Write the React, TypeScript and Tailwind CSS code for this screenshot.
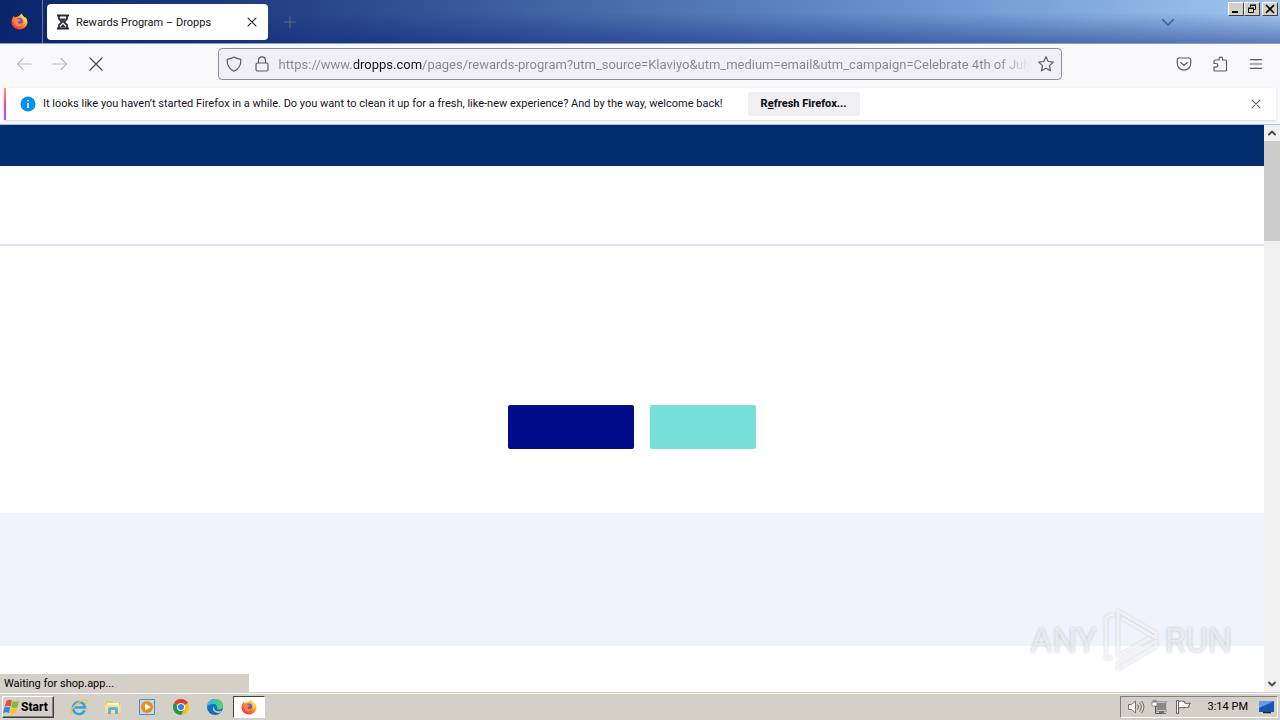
import { useId, useState } from "react";
import type { ReactNode } from "react";

const PAGE_URL =
  "https://www.dropps.com/pages/rewards-program?utm_source=Klaviyo&utm_medium=email&utm_campaign=Celebrate 4th of July";

function FirefoxLogo({ size }: { size: number }) {
  const id = useId();
  return (
    <svg width={size} height={size} viewBox="0 0 32 32" aria-hidden="true">
      <defs>
        <linearGradient id={id + "a"} x1="0.85" y1="0.1" x2="0.15" y2="0.95">
          <stop offset="0" stopColor="#fff44f" />
          <stop offset="0.3" stopColor="#ffb02e" />
          <stop offset="0.6" stopColor="#ff6b2b" />
          <stop offset="1" stopColor="#f0255f" />
        </linearGradient>
        <radialGradient id={id + "b"} cx="0.5" cy="0.35" r="0.7">
          <stop offset="0" stopColor="#a45bff" />
          <stop offset="1" stopColor="#5b35c9" />
        </radialGradient>
      </defs>
      <path
        d="M20 1c1 4 4 5 6 8l2-1c2 3 3 6 3 9 0 8-7 14-15 14S1 25 1 17c0-5 2-9 5-12l1 4c1-1 3-2 5-2 3-1 5-3 8-6z"
        fill={`url(#${id}a)`}
      />
      <circle cx="16" cy="15" r="6" fill={`url(#${id}b)`} />
      <path d="M5 11c3-2 7-1 9 1l3 1c0 2-4 2-4 4s1 3 3 3c2 0 4-1 6-1-2 5-6 7-11 6C7 23 4 17 5 11z" fill="#ff8a2a" />
      <path d="M20 1c-2 4 0 7 3 10s2 8 0 11c7-4 6-10 3-13s-5-4-6-8z" fill="#ffd83d" />
    </svg>
  );
}

function Line({ d, size = 16, width = 1.2 }: { d: string; size?: number; width?: number }) {
  return (
    <svg
      width={size}
      height={size}
      viewBox="0 0 16 16"
      fill="none"
      stroke="currentColor"
      strokeWidth={width}
      strokeLinecap="round"
      strokeLinejoin="round"
      aria-hidden="true"
    >
      <path d={d} />
    </svg>
  );
}

const icons = {
  back: "M15 8H1.5M7 2.5L1.5 8 7 13.5",
  forward: "M1 8h13.5M9 2.5L14.500 8 9 13.500",
  stop: "M2 2l12 12M14 2L2 14",
  close: "M3.500 3.500l9 9M12.500 3.500l-9 9",
  shield: "M8 1c2 1.300 4 1.900 6 2.100.6.1.9.5.9 1C14.900 10 12 13.500 8 15.200 4 13.500 1.100 10 1.100 4.100c0-.5.3-.9.9-1C4 2.900 6 2.300 8 1z",
  lock: "M3.500 7h9c.8 0 1.500.7 1.500 1.500v5c0 .8-.7 1.500-1.500 1.500h-9c-.8 0-1.500-.7-1.500-1.500v-5C2 7.700 2.700 7 3.500 7zM4.500 7V4.300a3.500 3.500 0 0 1 7 0V7",
  star: "M8 .8l2.200 4.700 5.100.6-3.800 3.500 1 5.200L8 12.200l-4.500 2.600 1-5.200L.7 6.100l5.100-.6z",
  pocket: "M3 2h10c1 0 1.700.7 1.700 1.700v3.800a6.700 6.700 0 0 1-13.400 0V3.700C1.300 2.700 2 2 3 2zM4.800 6.500L8 9.500l3.200-3",
  puzzle: "M2 5.500V7.500h2a1.800 1.800 0 0 1 0 3.600H2V14c0 .6.4 1 1 1h10.500c.6 0 1-.4 1-1V5c0-.6-.4-1-1-1H10.500V2.800a1.700 1.700 0 0 0-3.400 0V4H3.500C2.700 4 2 4.700 2 5.500z",
  menu: "M1.500 3h13M1.500 8h13M1.500 13h13",
  down: "M2.500 5.500L8 11l5.500-5.500",
};

function IconButton({ label, className, children }: { label: string; className: string; children: ReactNode }) {
  return (
    <button type="button" aria-label={label} className={`flex shrink-0 items-center justify-center ${className}`}>
      {children}
    </button>
  );
}

function Hourglass() {
  return (
    <svg width="16" height="16" viewBox="0 0 16 16" fill="none" stroke="#2b2b33" aria-hidden="true">
      <path d="M2 1.500h12M2 14.500h12" strokeWidth="2" />
      <path d="M4 2v3l3 3-3 3v3M12 2v3L9 8l3 3v3" strokeWidth="1.800" />
      <path d="M5 4.500h6L8 7.500zM5 13.500L8 10l3 3.500z" fill="#2b2b33" stroke="none" />
    </svg>
  );
}

const windowButton =
  "h-3.5 w-4 bg-[#d4d0c8] text-black border border-t-white border-l-white border-r-[#404040] border-b-[#404040]";

function TitleBar() {
  return (
    <header className="flex h-11 shrink-0 items-stretch border-b border-[#8d9fc4] bg-[linear-gradient(to_bottom,transparent_30%,rgba(10,36,120,0.45)),linear-gradient(to_right,#0a246a,#2c4a8e_28%,#6c94cf_72%,#a0c5ee)]">
      <IconButton label="Firefox View" className="w-[43px] border-r border-[#6175a8] pr-1">
        <FirefoxLogo size={17} />
      </IconButton>
      <div className="ml-1 mt-1 flex h-9 w-[221px] items-center rounded bg-white pl-2 pr-2">
        <Hourglass />
        <span className="ml-[5px] flex-1 pt-0.5 whitespace-nowrap text-[11px] text-[#15141a]">Rewards Program – Dropps</span>
        <IconButton label="Close tab" className="size-4 text-[#15141a]">
          <Line d={icons.close} size={14} />
        </IconButton>
      </div>
      <IconButton label="New tab" className="w-11 text-[#5b6a7c]">
        <Line d="M8 2v12M2 8h12" width={1} />
      </IconButton>
      <IconButton label="List all tabs" className="ml-auto mr-11 w-8 text-[#3f5f90]">
        <Line d={icons.down} width={1.500} />
      </IconButton>
      <div className="mt-0.5 mr-0.5 flex items-start">
        <IconButton label="Minimize" className={windowButton}>
          <svg width="12" height="10" viewBox="0 0 12 10" aria-hidden="true">
            <path d="M2 7h6v2H2z" />
          </svg>
        </IconButton>
        <IconButton label="Restore" className={windowButton}>
          <svg width="12" height="10" viewBox="0 0 12 10" fill="none" stroke="#000" aria-hidden="true">
            <path d="M4.500 3V1.500h5v4H8M4 1h6M2.500 4.500h5v4h-5zM2 4h6" />
          </svg>
        </IconButton>
        <IconButton label="Close" className={`ml-0.5 ${windowButton}`}>
          <svg width="12" height="10" viewBox="0 0 12 10" fill="none" stroke="#000" strokeWidth="1.600" aria-hidden="true">
            <path d="M2 1l8 8M10 1L2 9" />
          </svg>
        </IconButton>
      </div>
    </header>
  );
}

function NavBar() {
  return (
    <nav aria-label="Navigation" className="flex h-11 shrink-0 items-center bg-[#f9f9fb] pb-1 text-[#5b5b66]">
      <div className="flex flex-1 items-center gap-5 pl-4">
        <IconButton label="Back" className="size-4 text-[#bcbcc3]">
          <Line d={icons.back} />
        </IconButton>
        <IconButton label="Forward" className="size-4 text-[#bcbcc3]">
          <Line d={icons.forward} />
        </IconButton>
        <IconButton label="Stop" className="size-4 text-[#45454f]">
          <Line d={icons.stop} />
        </IconButton>
      </div>
      <div className="flex h-8 w-[66%] shrink-0 items-center rounded border border-[#8f8f9d] bg-[#f0f0f4] pl-[7px] pr-[7px]">
        <IconButton label="Tracking protection" className="size-4">
          <Line d={icons.shield} />
        </IconButton>
        <IconButton label="Site information" className="ml-3 size-4">
          <Line d={icons.lock} />
        </IconButton>
        <input
          type="text"
          aria-label="Address"
          defaultValue={PAGE_URL}
          className="mr-2 ml-[9px] h-7 min-w-0 flex-1 bg-[linear-gradient(to_right,#85858d_75px,#15141a_75px,#15141a_143px,#85858d_143px,#85858d_calc(100%-32px),#f0f0f4)] bg-clip-text text-[13px] text-transparent caret-black outline-none"
        />
        <IconButton label="Bookmark this page" className="size-4">
          <Line d={icons.star} />
        </IconButton>
      </div>
      <div className="flex flex-1 items-center justify-end gap-5 pr-4">
        <IconButton label="Save to Pocket" className="size-4">
          <Line d={icons.pocket} />
        </IconButton>
        <IconButton label="Extensions" className="size-4">
          <Line d={icons.puzzle} />
        </IconButton>
        <IconButton label="Open application menu" className="size-4">
          <Line d={icons.menu} size={14} />
        </IconButton>
      </div>
    </nav>
  );
}

function Notification({ onClose }: { onClose: () => void }) {
  return (
    <div className="shrink-0 border-b border-[#a9c4e8] bg-[#f9f9fb] px-1 pb-1">
      <div className="flex h-8 items-center bg-white pr-3 shadow-sm">
        <div className="h-full w-0.5 bg-linear-to-b from-[#ff9a5a] via-[#e0459b] to-[#9059ff]" />
        <svg className="ml-3.5 shrink-0" width="16" height="16" viewBox="0 0 16 16" aria-hidden="true">
          <circle cx="8" cy="8" r="7.500" fill="#0090ed" />
          <path d="M8 7v5M8 4v1.500" stroke="#fff" strokeWidth="1.500" />
        </svg>
        <p className="ml-[7px] whitespace-nowrap text-[11px] text-[#15141a]">
          It looks like you haven’t started Firefox in a while. Do you want to clean it up for a fresh, like-new
          experience? And by the way, welcome back!
        </p>
        <button
          type="button"
          className="ml-[25px] h-6 w-28 shrink-0 rounded bg-[#f0f0f2] text-[11px] font-extrabold whitespace-nowrap text-[#15141a]"
        >
          R<u>e</u>fresh Firefox...
        </button>
        <button type="button" aria-label="Dismiss" onClick={onClose} className="ml-auto flex size-4 items-center justify-center text-[#5b5b66]">
          <Line d={icons.close} size={14} />
        </button>
      </div>
    </div>
  );
}

function Scrollbar() {
  return (
    <div className="flex w-4 shrink-0 flex-col bg-[#f0f0f0] text-[#505050]">
      <IconButton label="Scroll up" className="h-4 w-4">
        <Line d="M5 9.500l3-3 3 3" width={2} />
      </IconButton>
      <div className="h-[100px] bg-[#cdcdcd]" />
      <IconButton label="Scroll down" className="mt-auto h-4 w-4">
        <Line d="M5 6.500l3 3 3-3" width={2} />
      </IconButton>
    </div>
  );
}

const markText = "text-[34px] leading-none text-white/60 [text-shadow:0_0_3px_#b8bcc8]";

function Watermark() {
  return (
    <div className="pointer-events-none absolute right-12 bottom-5 flex items-center">
      <span className={markText}>ANY</span>
      <svg
        className="mx-1.5 [filter:drop-shadow(0_0_1px_#b8bcc8)]"
        width="56"
        height="64"
        viewBox="0 0 56 64"
        fill="none"
        stroke="#fff"
        strokeOpacity="0.700"
        strokeWidth="3"
        strokeLinejoin="round"
        aria-hidden="true"
      >
        <path d="M9 50H3V10l4-3h4M15 45V3l38 22v5L19 10M15 16v32l32-18M15 55v6l38-22v-6z" />
      </svg>
      <span className={markText}>RUN</span>
    </div>
  );
}

function WebPage() {
  return (
    <div className="relative flex min-h-0 flex-1">
      <main className="flex min-w-0 flex-1 flex-col bg-white">
        <div className="h-[41px] bg-[#002d6e]" />
        <div className="h-20 border-b-2 border-[#dfe3fa]" />
        <section className="flex h-[267px] items-end justify-center gap-4 pb-16">
          <a href="#join" aria-label="Join" className="h-11 w-[126px] rounded-xs bg-[#000c89]" />
          <a href="#login" aria-label="Log in" className="h-11 w-[106px] rounded-xs bg-[#76dfd7]" />
        </section>
        <section className="h-[133px] bg-[#eef3fc]" />
      </main>
      <Scrollbar />
      <Watermark />
      <div role="status" className="absolute bottom-0 left-0 h-[18px] w-[249px] bg-[#d4d0c8] pl-1 text-[11px] leading-5 text-black">
        Waiting for shop.app...
      </div>
    </div>
  );
}

function InternetExplorer() {
  return (
    <svg width="18" height="18" viewBox="0 0 18 18" fill="none" aria-hidden="true">
      <path d="M14.500 12.500A6 6 0 1 1 15 9.500H5" stroke="#2fa5e4" strokeWidth="2.600" />
      <path d="M2 16C-1 12 8 2 16 2c2 1 0 4-1 5" stroke="#f0c445" strokeWidth="1.300" />
    </svg>
  );
}

function Explorer() {
  return (
    <svg width="18" height="18" viewBox="0 0 18 18" aria-hidden="true">
      <path d="M2 3h6l1 2h7v10H2z" fill="#e9c75d" />
      <path d="M3 5h12v5H3z" fill="#fff7cf" />
      <path d="M1 7h16v8H1z" fill="#f7e08c" />
      <path d="M4 16v-5c0-1 1-2 2-2h6c1 0 2 1 2 2v5h-3v-4H7v4z" fill="#5fb4dd" />
    </svg>
  );
}

function MediaPlayer() {
  return (
    <svg width="18" height="18" viewBox="0 0 18 18" aria-hidden="true">
      <path d="M1.500 1.500h15v15h-15z" fill="#b9dcf2" stroke="#4a8fc4" />
      <circle cx="9" cy="9" r="6" fill="#f58a12" />
      <path d="M7 5.500l6 3.500-6 3.500z" fill="#fff" />
    </svg>
  );
}

function Chrome() {
  return (
    <svg width="18" height="18" viewBox="0 0 18 18" aria-hidden="true">
      <circle cx="9" cy="9" r="8" fill="#fbc116" />
      <path d="M9 9L2.070 5A8 8 0 0 1 15.930 5z" fill="#e33b2e" />
      <path d="M9 9L2.070 5A8 8 0 0 0 9 17l3.500-6z" fill="#229a4b" />
      <path d="M9 5h6.930L9 4z" fill="#e33b2e" />
      <circle cx="9" cy="9" r="4" fill="#fff" />
      <circle cx="9" cy="9" r="3" fill="#3b7ded" />
    </svg>
  );
}

function Edge() {
  return (
    <svg width="18" height="18" viewBox="0 0 18 18" aria-hidden="true">
      <circle cx="9" cy="9" r="8" fill="#1271c4" />
      <path d="M1 9c0-5 4-8 8-8s8 3 8 7c0 3-4 4-6 3 1-3-1-5-4-5-3 0-5 1-6 3z" fill="#35c3c9" />
      <path d="M9 1c5 0 8 3 8 7 0 3-4 4-6 3 1-2 1-7-2-10z" fill="#54d078" />
      <path d="M8 8c-1 4 2 6 8 5-1 1-2 2-3 2-4 0-8-3-5-7z" fill="#d4d0c8" />
    </svg>
  );
}

function WindowsFlag() {
  return (
    <svg className="shrink-0" width="17" height="16" viewBox="0 0 17 16" aria-hidden="true">
      <path d="M3.500 2c2-1.500 3.500-1.500 5.500-.5L7.500 7.500c-2-1-4-1-6 .5z" fill="#e8502a" />
      <path d="M9.700 2c2 1 4 1 6.300-.5L14.500 8c-2 1.500-4 1-6.300 0z" fill="#7fb93c" />
      <path d="M1.200 9c2-1.500 4-1.500 6-.5L6 14c-2-1-4-1-6 .5z" fill="#3b86d8" />
      <path d="M8 9c2 1 4 1 6.200-.5L13 14c-2 1.500-4 1.500-6.300.5z" fill="#f6c12d" />
    </svg>
  );
}

function Taskbar() {
  const raised = "border border-t-white border-l-white border-r-[#404040] border-b-[#404040]";
  return (
    <footer className="flex h-7 shrink-0 items-center border-t border-[#d4d0c8] bg-[#d4d0c8] shadow-[inset_0_1px_0_#fff]">
      <button type="button" className={`ml-0.5 flex h-[22px] w-[52px] items-center gap-px text-xs font-extrabold text-black shadow-[inset_-1px_-1px_0_#808080] ${raised}`}>
        <WindowsFlag />
        Start
      </button>
      <div className="ml-4 flex items-center gap-4">
        <IconButton label="Internet Explorer" className="size-[18px]"><InternetExplorer /></IconButton>
        <IconButton label="Windows Explorer" className="size-[18px]"><Explorer /></IconButton>
        <IconButton label="Media Player" className="size-[18px]"><MediaPlayer /></IconButton>
        <IconButton label="Chrome" className="size-[18px]"><Chrome /></IconButton>
        <IconButton label="Edge" className="size-[18px]"><Edge /></IconButton>
      </div>
      <IconButton label="Firefox" className="ml-[9px] h-[22px] w-8 border border-t-[#404040] border-l-[#404040] border-r-white border-b-white bg-white">
        <FirefoxLogo size={16} />
      </IconButton>
      <div className="ml-auto mr-0.5 flex h-[22px] items-center border border-t-[#808080] border-l-[#808080] border-r-white border-b-white pl-1.5 text-[11px] text-black">
        <svg width="18" height="16" viewBox="0 0 18 16" fill="none" stroke="#77736d" aria-hidden="true">
          <path d="M1.500 5.500h3L8.500 2v12l-4-3.500h-3z" fill="#fff" />
          <path d="M10.500 5.500q2 2.500 0 5M12.500 3.500q3.500 4.500 0 9M14.500 2q5 6 0 12" />
        </svg>
        <svg className="ml-1.5" width="16" height="16" viewBox="0 0 16 16" aria-hidden="true">
          <path d="M5.500 3.500h10v8h-10z" fill="#888" stroke="#fff" />
          <path d="M5 3h11v9H5z" fill="none" stroke="#55524c" strokeWidth="0.700" />
          <path d="M8 12h5v2H8zM6 14h9v1H6z" fill="#77736d" />
          <path d="M1.500 3.500h4v4h-1v7h6" fill="none" stroke="#55524c" />
          <path d="M1 3h5v4H1zM2 1h1v2H2zM4 1h1v2H4z" fill="#fff" stroke="#55524c" strokeWidth="0.500" />
        </svg>
        <svg className="ml-2" width="17" height="16" viewBox="0 0 17 16" fill="#fff" stroke="#66625c" aria-hidden="true">
          <path d="M1.500 1.500h2v13h-2z" />
          <path d="M3.500 2.500q3-1 6 0v1.500q3 1 6 0l-2 3 1 1q-3 1-5 0V9q-3-1-6 0z" />
        </svg>
        <time className="ml-4 pt-0.5 whitespace-nowrap">3:14 PM</time>
        <svg className="ml-2.5 mr-px" width="18" height="16" viewBox="0 0 18 16" aria-hidden="true">
          <path d="M1 2h15v11H1z" fill="#1c56b4" />
          <path d="M1 2h15L1 9z" fill="#5f9ce8" />
          <path d="M5 13.500h8" stroke="#222" strokeWidth="1.500" />
        </svg>
      </div>
    </footer>
  );
}

export default function App() {
  const [showNotice, setShowNotice] = useState(true);
  return (
    <div className="flex h-screen flex-col overflow-hidden bg-white font-[Roboto,'Noto_Sans',sans-serif]">
      <TitleBar />
      <NavBar />
      {showNotice && <Notification onClose={() => setShowNotice(false)} />}
      <WebPage />
      <Taskbar />
    </div>
  );
}
